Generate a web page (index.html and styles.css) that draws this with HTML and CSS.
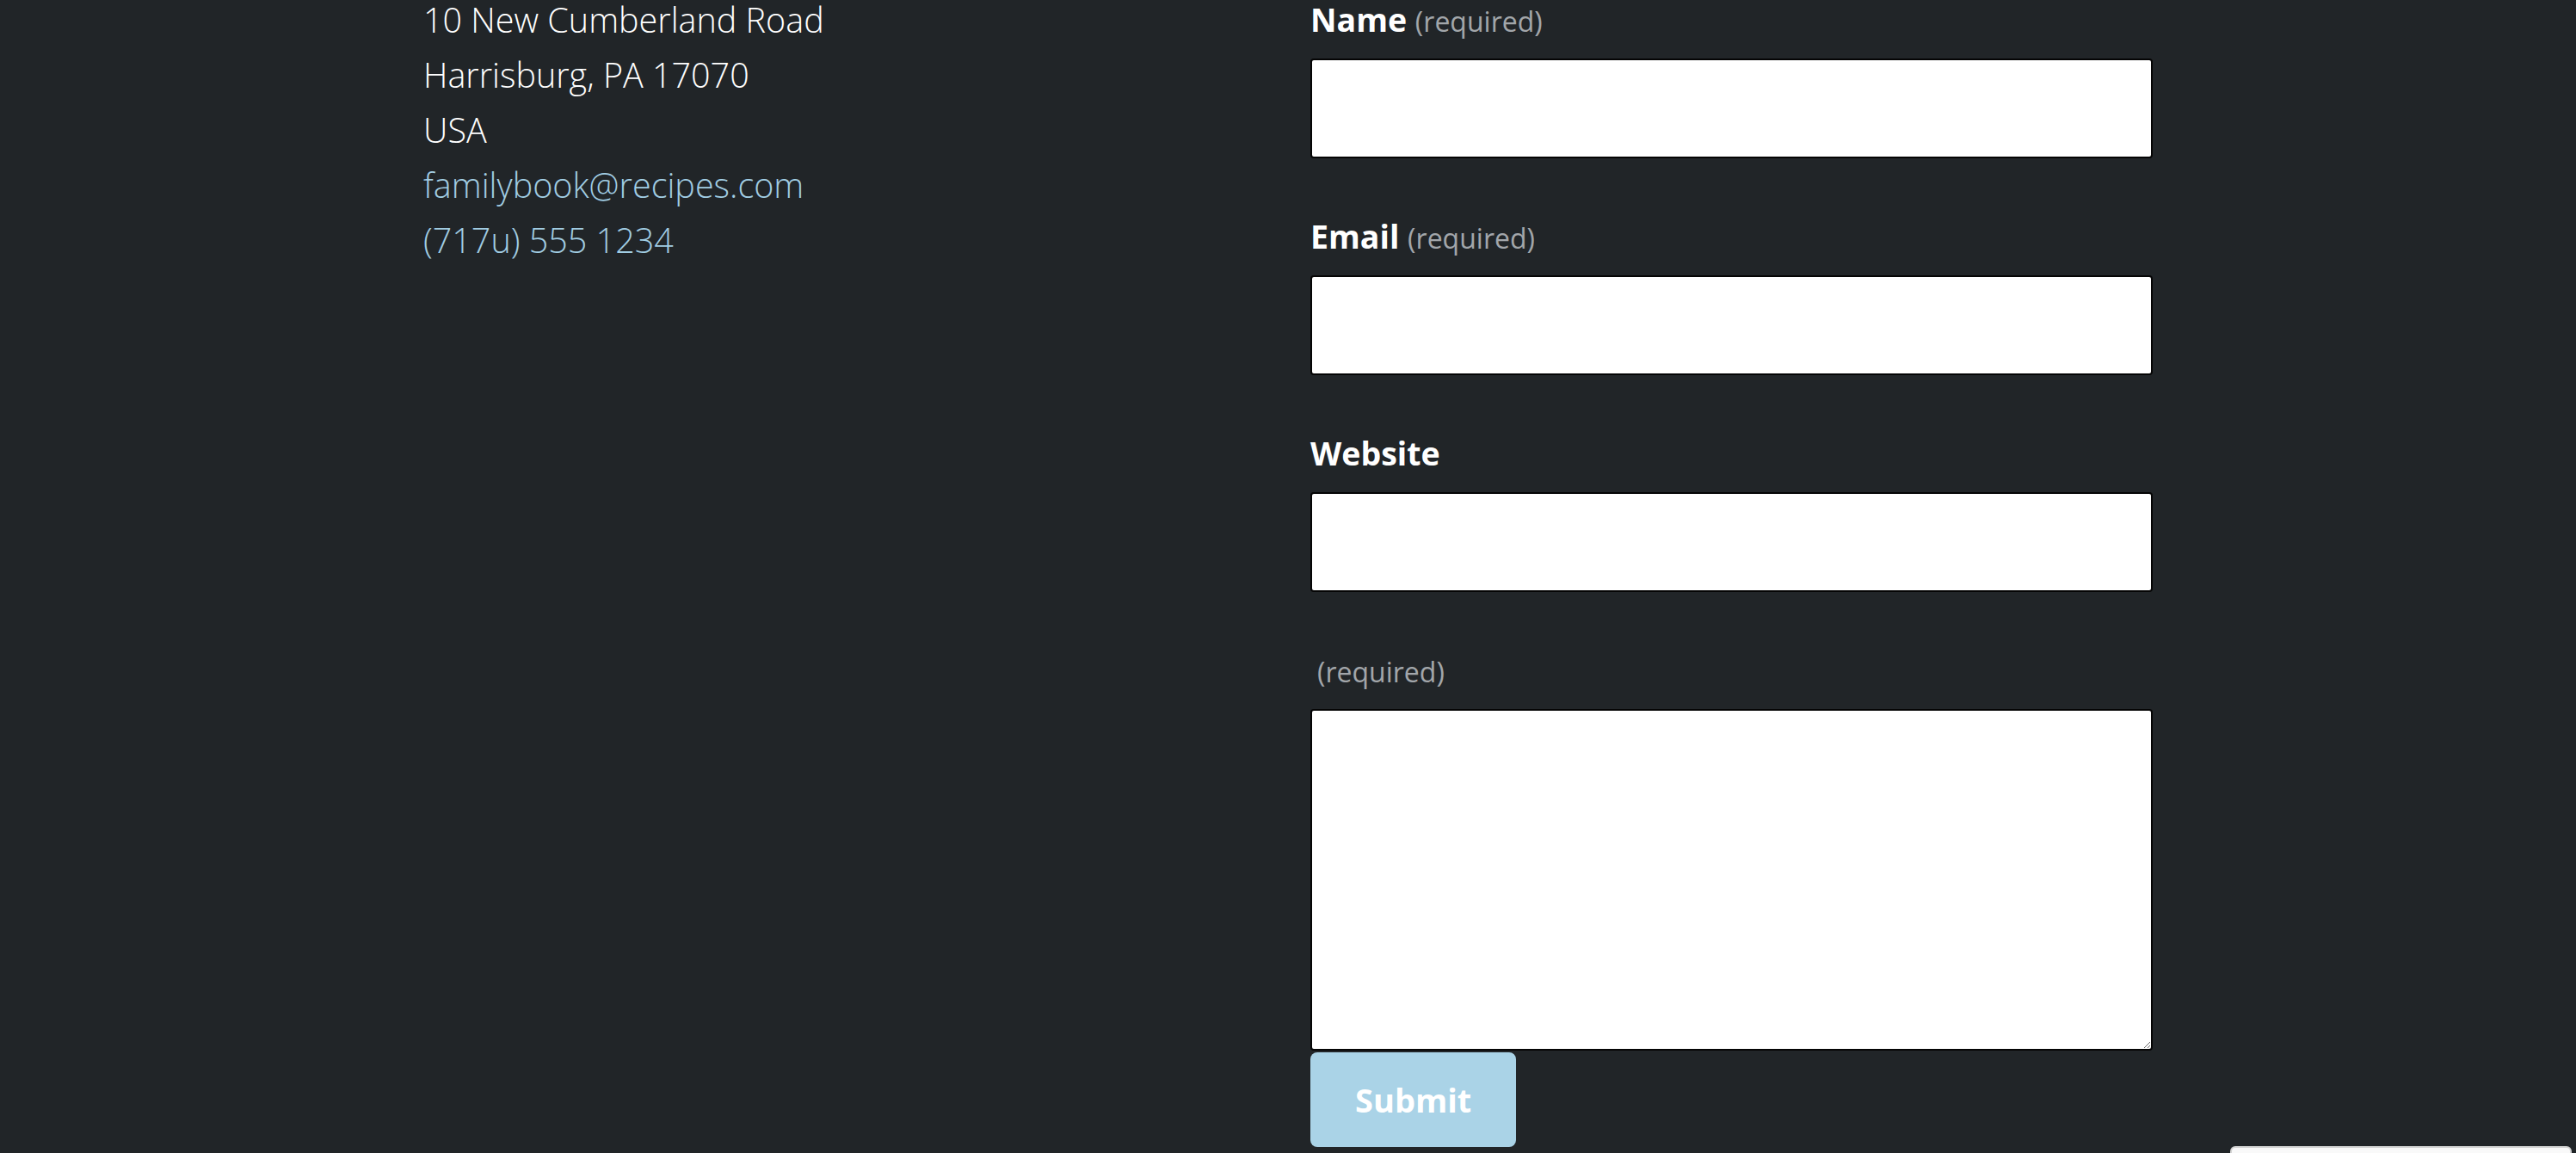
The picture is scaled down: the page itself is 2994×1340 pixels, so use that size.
FILE: index.html
```html
<!DOCTYPE html>
<html lang="en">
<head>
<meta charset="utf-8">
<title>Contact</title>
<link rel="stylesheet" href="styles.css">
</head>
<body>
<main class="contact">
  <div class="contact-info">
    <div class="line">10 New Cumberland Road</div>
    <div class="line">Harrisburg, PA 17070</div>
    <div class="line">USA</div>
    <a class="line link" href="#">familybook@recipes.com</a>
    <a class="line link" href="#">(717u) 555 1234</a>
  </div>
  <form class="contact-form">
    <div class="field">
      <label class="field-label">Name <span class="req">(required)</span></label>
      <input class="text-input" type="text">
    </div>
    <div class="field">
      <label class="field-label">Email <span class="req">(required)</span></label>
      <input class="text-input" type="email">
    </div>
    <div class="field">
      <label class="field-label">Website</label>
      <input class="text-input" type="url">
    </div>
    <div class="field field-last">
      <label class="field-label"><span class="req req-solo">(required)</span></label>
      <textarea class="text-area"></textarea>
    </div>
    <button class="submit" type="button">Submit</button>
  </form>
</main>
<div class="badge"></div>
</body>
</html>
```
FILE: styles.css
```css
html, body {
  margin: 0;
  padding: 0;
  background: #212528;
  overflow: hidden;
}

body {
  font-family: "Open Sans", "Liberation Sans", sans-serif;
  color: #ffffff;
}

.contact {
  width: 2010px;
  margin: -9px auto 0;
  display: grid;
  grid-template-columns: 1fr 1fr;
  column-gap: 52px;
  align-items: start;
}

.contact-info {
  display: flex;
  flex-direction: column;
  font-size: 39.5px;
  line-height: 64px;
  font-weight: 300;
}

.line {
  display: block;
  color: #ffffff;
  text-decoration: none;
}

.link {
  color: #a1cde3;
}

.contact-form {
  display: flex;
  flex-direction: column;
  align-items: flex-start;
}

.field {
  width: 100%;
  margin-bottom: 59px;
}

.field-last {
  margin-bottom: 0;
}

.field-label {
  display: block;
  height: 64px;
  font-size: 37.5px;
  line-height: 64px;
  font-weight: 700;
  color: #ffffff;
  margin-bottom: 13px;
}

.req {
  font-size: 32px;
  line-height: 1;
  font-weight: 400;
  color: #a2a6aa;
}

.req-solo {
  margin-left: 8px;
}

.text-input,
.text-area {
  display: block;
  box-sizing: border-box;
  width: 100%;
  background: #ffffff;
  border: 2px solid #050505;
  border-radius: 4px;
  margin: 0;
  font: inherit;
}

.text-input {
  height: 116px;
}

.text-area {
  height: 397px;
}

.submit {
  margin-top: 2px;
  box-sizing: border-box;
  height: 110px;
  padding: 0 52px;
  border: none;
  border-radius: 8px;
  background: #aad3e7;
  color: #ffffff;
  font-family: "Open Sans", "Liberation Sans", sans-serif;
  font-size: 38px;
  font-weight: 700;
  line-height: 1;
}

.badge {
  position: fixed;
  right: 5px;
  bottom: -60px;
  width: 397px;
  height: 68px;
  box-sizing: border-box;
  background: #f9f9f9;
  border: 2px solid #d2d2d2;
  border-radius: 6px;
}
```
